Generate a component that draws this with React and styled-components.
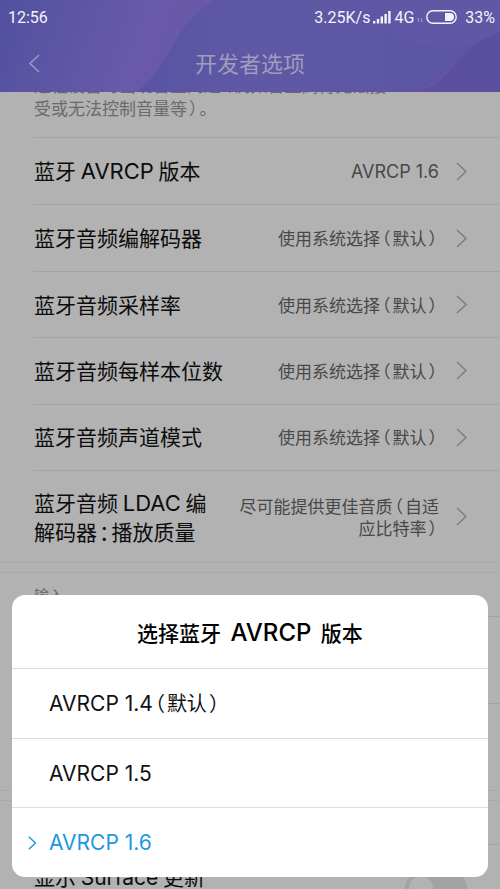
import React, { useState } from "react";
import styled, { createGlobalStyle } from "styled-components";

const GlobalStyle = createGlobalStyle`
  * {
    box-sizing: border-box;
  }

  body {
    margin: 0;
    background: #b2b2b2;
    font-family: "Noto Sans CJK SC", sans-serif;
  }

  button, input {
    margin: 0;
    font: inherit;
    color: inherit;
  }
`;

const Screen = styled.div`
  position: relative;
  display: flex;
  flex-direction: column;
  height: 100vh;
  overflow: hidden;
  background: #b2b2b2;
`;

const Header = styled.header`
  position: relative;
  flex: none;
  color: #a09dbc;
  background: #5c56a3;
`;

const Wallpaper = styled.svg`
  position: absolute;
  inset: 0;
  width: 100%;
  height: 100%;
`;

const StatusBar = styled.div`
  position: relative;
  display: flex;
  align-items: center;
  height: 34px;
  padding: 0 5px 0 8px;
  font-family: Roboto, sans-serif;
  font-size: 16px;
  color: #f4f3fb;

  svg {
    display: block;
  }
`;

const StatusIcons = styled.div`
  display: flex;
  align-items: center;
  gap: 3px;
  margin-left: auto;
`;

const Percent = styled.span`
  margin-left: 5px;
`;

const TitleBar = styled.div`
  position: relative;
  display: grid;
  grid-template-columns: 44px 1fr 44px;
  align-items: center;
  height: 58px;
  padding: 0 12px;

  h1 {
    margin: 0;
    padding-bottom: 3px;
    font-size: 22px;
    font-weight: 400;
    line-height: 30px;
    text-align: center;
  }
`;

const BackButton = styled.button`
  display: flex;
  align-items: center;
  justify-content: center;
  height: 44px;
  padding: 0;
  border: 0;
  background: none;
`;

const Settings = styled.main`
  flex: 1;
  min-height: 0;
  overflow: hidden;
`;

const Summary = styled.p`
  margin: -19px 0 0 34px;
  padding-bottom: 18px;
  width: 360px;
  font-size: 17px;
  line-height: 23px;
  color: #6b6b6b;
`;

const Rows = styled.div`
  display: flex;
  flex-direction: column;
  min-height: 333px;
`;

const Row = styled.button`
  display: flex;
  flex: 1;
  align-items: center;
  width: calc(100% - 33px);
  min-height: ${(p) => (p.$tall ? 92 : 66)}px;
  margin-left: 33px;
  padding: 0 32px 0 1px;
  border: 0;
  border-top: 1px solid #a3a3a3;
  background: none;
  text-align: left;
`;

const RowLabel = styled.span`
  flex: 1;
  padding-bottom: ${(p) => (p.$tall ? 0 : 2)}px;
  font-size: 21px;
  line-height: 28px;
  color: #0c0c0c;
`;

const RowValue = styled.span`
  max-width: 202px;
  margin: 0 17px 0 16px;
  font-size: 17px;
  line-height: 22px;
  text-align: right;
  color: #484848;
`;

const Latin = styled.span`
  font-family: Inter, "Liberation Sans", sans-serif;
  font-size: ${(p) => p.$size}px;
`;

const Punct = styled.span`
  margin: 0 2px;
  font-feature-settings: "halt";
`;

const SectionGap = styled.div`
  height: 11px;
  border-top: 1px solid #aaaaaa;
  border-bottom: 1px solid #aaaaaa;
`;

const SectionTitle = styled.h2`
  margin: 0;
  padding: 11px 34px;
  font-size: 15px;
  font-weight: 400;
  line-height: 21px;
  color: #6b6b6b;
`;

const SwitchRow = styled.label`
  display: flex;
  align-items: flex-start;
  justify-content: space-between;
  min-height: 87px;
  margin-left: 33px;
  padding: 17px 33px 0 1px;
  border-top: 1px solid #a3a3a3;
  font-size: 21px;
  line-height: 28px;
  color: #0c0c0c;
`;

const Switch = styled.input`
  appearance: none;
  width: 62px;
  height: 32px;
  margin-top: 10px;
  border: 4px solid #a3a3a3;
  border-radius: 16px;
  background: #a3a3a3;

  &::before {
    content: "";
    display: block;
    width: 24px;
    height: 24px;
    border-radius: 50%;
    background: #b2b2b2;
  }

  &:checked::before {
    margin-left: auto;
  }
`;

const Sheet = styled.div`
  position: absolute;
  left: 12px;
  right: 12px;
  bottom: 12px;
  overflow: hidden;
  border-radius: 13px;
  background: #fff;
`;

const SheetTitle = styled.h2`
  margin: 0;
  padding: 23px 0 21px;
  font-size: 21px;
  font-weight: 500;
  line-height: 28px;
  text-align: center;
  white-space: pre-wrap;
  color: #000;
`;

const Options = styled.div`
  display: flex;
  flex-direction: column;
  min-height: 209px;
`;

const Option = styled.label`
  display: flex;
  flex: 1;
  align-items: center;
  border-top: 1px solid #dcdcdc;
  font-size: 20px;
  line-height: 28px;
  color: ${(p) => (p.$active ? "#1c98e2" : "#111")};

  input {
    appearance: none;
    width: 0;
    height: 0;
  }
`;

const Mark = styled.span`
  display: flex;
  justify-content: center;
  width: 37px;
  padding-left: 4px;
`;

function Mixed({ text, size }) {
  return text
    .split(/([A-Za-z][A-Za-z0-9. ]*[A-Za-z0-9]|[（）：])/)
    .filter(Boolean)
    .map((part, i) => {
      if (/[A-Za-z]/.test(part)) {
        return (
          <Latin key={i} $size={size}>
            {part}
          </Latin>
        );
      }
      if (/[（）：]/.test(part)) return <Punct key={i}>{part}</Punct>;
      return part;
    });
}

function Chevron({ back, small, color }) {
  return (
    <svg
      width={small ? 9 : 12}
      height={small ? 14 : 19}
      viewBox="0 0 12 19"
      fill="none"
      stroke={color}
      strokeWidth={small ? 2 : 1.4}
      aria-hidden="true"
    >
      <path d={back ? "M11 1 2 9.5 11 18" : "M1 1 10 9.5 1 18"} />
    </svg>
  );
}

function SignalIcon() {
  return (
    <svg width="18" height="14" viewBox="0 0 18 14" fill="currentColor">
      <rect x="0" y="11" width="2.4" height="2.5" />
      <rect x="3.8" y="9" width="2.4" height="4.5" />
      <rect x="7.6" y="6.5" width="2.4" height="7" />
      <rect x="11.4" y="4" width="2.4" height="9.5" />
      <rect x="15.2" y="1" width="2.4" height="12.5" />
    </svg>
  );
}

function DataArrows() {
  return (
    <svg width="6" height="14" viewBox="0 0 6 14" stroke="#9691cb" fill="none">
      <path d="M1.5 12V8L0 9.5M4.5 8V12L6 10.5" />
    </svg>
  );
}

function BatteryIcon() {
  return (
    <svg width="31" height="14" viewBox="0 0 31 14" fill="none">
      <rect x="0.8" y="0.8" width="29.4" height="12.4" rx="6.2" stroke="currentColor" strokeWidth="1.4" />
      <path d="M19 3H24a4 4 0 0 1 0 8H19Z" fill="currentColor" />
    </svg>
  );
}

const codecs = [
  { label: "蓝牙 AVRCP 版本", value: "AVRCP 1.6" },
  { label: "蓝牙音频编解码器", value: "使用系统选择（默认）" },
  { label: "蓝牙音频采样率", value: "使用系统选择（默认）" },
  { label: "蓝牙音频每样本位数", value: "使用系统选择（默认）" },
  { label: "蓝牙音频声道模式", value: "使用系统选择（默认）" },
];

const ldac = {
  label: "蓝牙音频 LDAC 编解码器：播放质量",
  value: "尽可能提供更佳音质（自适应比特率）",
};

const versions = ["AVRCP 1.4（默认）", "AVRCP 1.5", "AVRCP 1.6"];

function SettingRow({ label, value, tall }) {
  return (
    <Row type="button" $tall={tall}>
      <RowLabel $tall={tall}>
        <Mixed text={label} size={22} />
      </RowLabel>
      <RowValue>
        <Mixed text={value} size={18} />
      </RowValue>
      <Chevron color="#7c7c7c" />
    </Row>
  );
}

function App() {
  const [version, setVersion] = useState("AVRCP 1.6");
  const [updates, setUpdates] = useState(false);

  return (
    <>
      <GlobalStyle />
      <Screen>
        <Header>
          <Wallpaper viewBox="0 0 500 92" preserveAspectRatio="none" aria-hidden="true">
            <defs>
              <linearGradient id="wave" x1="0" y1="0" x2="1" y2="0.15">
                <stop offset="0" stopColor="#5250a0" />
                <stop offset="0.45" stopColor="#6057a5" />
                <stop offset="0.7" stopColor="#685aa8" />
                <stop offset="1" stopColor="#6859a7" />
              </linearGradient>
              <linearGradient id="base" x1="0" y1="0" x2="1" y2="0">
                <stop offset="0.25" stopColor="#5753a3" />
                <stop offset="0.5" stopColor="#5f58a5" />
                <stop offset="1" stopColor="#5b55a3" />
              </linearGradient>
            </defs>
            <rect width="500" height="92" fill="url(#base)" />
            <path d="M0 0H215C180 22 176 44 160 66Q150 82 136 92H0Z" fill="url(#wave)" />
            <path d="M372 0C382 34 412 46 444 48C470 48 488 38 500 32V0Z" fill="#6058a5" />
            <path d="M500 32C456 48 452 78 410 92H500Z" fill="#5a509f" />
            <path d="M474 46C448 62 446 80 410 92H421C452 78 452 62 474 46Z" fill="#6653a3" />
          </Wallpaper>
          <StatusBar>
            <span>12:56</span>
            <StatusIcons>
              <span>3.25K/s</span>
              <SignalIcon />
              <span>4G</span>
              <DataArrows />
              <BatteryIcon />
              <Percent>33%</Percent>
            </StatusIcons>
          </StatusBar>
          <TitleBar>
            <BackButton type="button" aria-label="返回">
              <Chevron back color="#a09dbc" />
            </BackButton>
            <h1>开发者选项</h1>
          </TitleBar>
        </Header>

        <Settings>
          <Summary>
            <Mixed text="远程设备时出现音量问题（例如音量高得无法接受或无法控制音量等）。" />
          </Summary>
          <Rows>
            {codecs.map((row) => (
              <SettingRow key={row.label} {...row} />
            ))}
          </Rows>
          <SettingRow {...ldac} tall />
          <SectionGap />
          <SectionTitle>输入</SectionTitle>
          <SwitchRow as="div" />
          <SwitchRow as="div" />
          <SectionGap />
          <SectionTitle>绘图</SectionTitle>
          <SwitchRow>
            <span>
              <Mixed text="显示 Surface 更新" size={21} />
            </span>
            <Switch
              type="checkbox"
              role="switch"
              checked={updates}
              onChange={(e) => setUpdates(e.target.checked)}
            />
          </SwitchRow>
        </Settings>

        <Sheet role="dialog" aria-labelledby="sheet-title">
          <SheetTitle id="sheet-title">
            <Mixed text="选择蓝牙  AVRCP  版本" size={24} />
          </SheetTitle>
          <Options role="radiogroup" aria-labelledby="sheet-title">
            {versions.map((name) => (
              <Option key={name} $active={name === version}>
                <input
                  type="radio"
                  name="version"
                  value={name}
                  checked={name === version}
                  onChange={() => setVersion(name)}
                />
                <Mark>{name === version && <Chevron small color="#1c98e2" />}</Mark>
                <span>
                  <Mixed text={name} size={21} />
                </span>
              </Option>
            ))}
          </Options>
        </Sheet>
      </Screen>
    </>
  );
}

export default App;
